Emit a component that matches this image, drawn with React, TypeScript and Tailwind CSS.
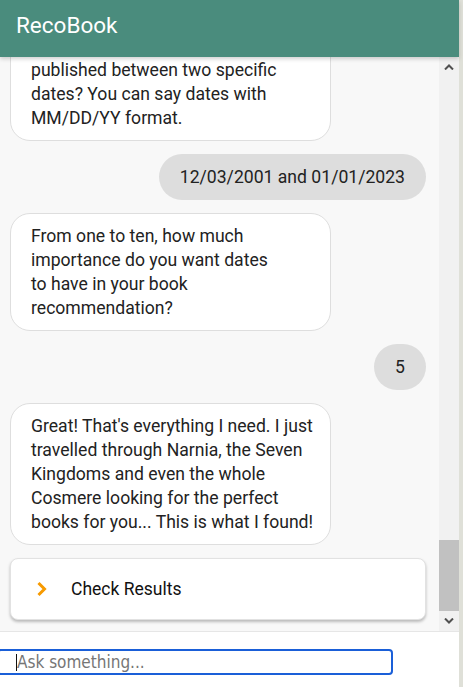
import React from "react";

type Message = {
  from: "bot" | "user";
  lines: string[];
};

const messages: Message[] = [
  {
    from: "bot",
    lines: [
      "Perfect! Now, are",
      "you looking for books",
      "published between two specific",
      "dates? You can say dates with",
      "MM/DD/YY format.",
    ],
  },
  { from: "user", lines: ["12/03/2001 and 01/01/2023"] },
  {
    from: "bot",
    lines: [
      "From one to ten, how much",
      "importance do you want dates",
      "to have in your book",
      "recommendation?",
    ],
  },
  { from: "user", lines: ["5"] },
  {
    from: "bot",
    lines: [
      "Great! That's everything I need. I just",
      "travelled through Narnia, the Seven",
      "Kingdoms and even the whole",
      "Cosmere looking for the perfect",
      "books for you... This is what I found!",
    ],
  },
];

const Bubble: React.FC<{ message: Message }> = ({ message }) => {
  if (message.from === "user") {
    return (
      <div className="flex justify-end">
        <div className="rounded-full bg-[#dddddd] px-[21px] py-[11px] text-[17.6px] leading-[24px] text-[#222]">
          {message.lines[0]}
        </div>
      </div>
    );
  }
  return (
    <div className="w-[321px] shrink-0 rounded-[20px] border border-[#dedede] bg-white px-[20px] py-[10px] text-[17.6px] leading-[24px] text-[#222]">
      {message.lines.map((line, i) => (
        <div key={i} className="whitespace-nowrap">
          {line}
        </div>
      ))}
    </div>
  );
};

const Chevron: React.FC<{ up?: boolean }> = ({ up }) => (
  <svg width="10" height="6" viewBox="0 0 10 6" className={up ? "" : "rotate-180"}>
    <polyline points="1,5.5 5,1.5 9,5.5" fill="none" stroke="#505050" strokeWidth="2" />
  </svg>
);

export default function App() {
  return (
    <div className="flex h-[687px] w-[463px] overflow-hidden bg-[#dfe0d8] font-['Roboto',sans-serif]">
      <div className="flex w-[459px] flex-col">
        <header className="relative z-10 flex h-[57px] shrink-0 items-start bg-[#4a8c7d] pl-[16px] pt-[11px] shadow-[0_2px_4px_rgba(0,0,0,0.18)]">
          <h1 className="text-[22.5px] leading-[28px] text-white">RecoBook</h1>
        </header>

        <div className="flex h-[574px] shrink-0">
          <div className="flex flex-1 flex-col justify-end gap-[13px] overflow-hidden bg-[#f8f8f8] pb-[11px] pl-[10px] pr-[13px]">
            {messages.map((m, i) => (
              <Bubble key={i} message={m} />
            ))}
            <div className="flex h-[62px] shrink-0 items-center rounded-[8px] border border-[#e2e2e2] bg-white pl-[25px] shadow-[0_2px_3px_rgba(0,0,0,0.25)]">
              <svg width="12" height="16" viewBox="0 0 12 16">
                <polyline points="2.5,2 8.5,8 2.5,14" fill="none" stroke="#f79a00" strokeWidth="3" />
              </svg>
              <span className="ml-[23px] text-[17.5px] text-[#111]">Check Results</span>
            </div>
          </div>

          <div className="flex w-[20px] flex-col bg-[#f1f1f1]">
            <div className="flex h-[20px] items-center justify-center">
              <Chevron up />
            </div>
            <div className="flex flex-1 flex-col justify-end">
              <div className="h-[71px] bg-[#c1c1c1]" />
            </div>
            <div className="flex h-[20px] items-center justify-center">
              <Chevron />
            </div>
          </div>
        </div>

        <div className="flex flex-1 items-center border-t border-[#e6e6e6] bg-white pt-[5px]">
          <div className="relative -ml-[3px] w-[396px]">
            <input
              className="h-[26px] w-full rounded-[4px] border-2 border-[#1a5fd8] pl-[18px] font-['DejaVu_Sans_Condensed','DejaVu_Sans',sans-serif] text-[17px] [font-stretch:condensed] text-[#222] outline-none placeholder:text-[#767676]"
              placeholder="Ask something..."
            />
            <div className="absolute left-[19px] top-[5px] h-[17px] w-[1px] bg-[#111]" />
          </div>
        </div>
      </div>
    </div>
  );
}
